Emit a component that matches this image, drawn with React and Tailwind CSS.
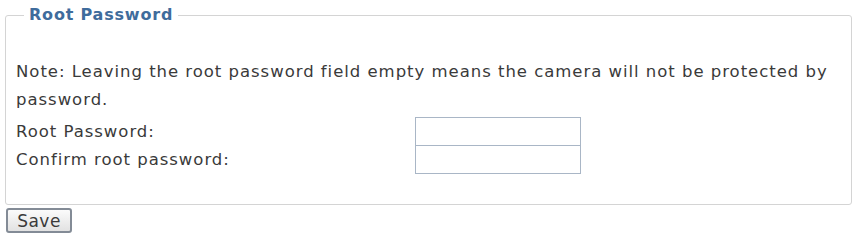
export default function App() {
  return (
    <div className="w-[854px] h-[235px] bg-white pt-[5px] pl-[5px] pr-[2px] text-[#3a3a3a] font-['DejaVu_Sans',sans-serif] text-[16.5px] tracking-[0.97px] leading-[28px]">
      <fieldset className="border border-[#d4d4d4] rounded-[3px] h-[200px] pl-[10px] pr-2 pt-[33px]">
        <legend className="ml-[8px] px-[5px] text-[16px] tracking-[0.8px] font-bold text-[#3f6c9c] leading-[20px]">
          Root Password
        </legend>
        <p>Note: Leaving the root password field empty means the camera will not be protected by password.</p>
        <div className="flex items-center h-[29px] mt-[3px]">
          <span className="w-[399px]">Root Password:</span>
          <input type="password" className="w-[166px] h-[29px] border border-[#a9b6c6] bg-white outline-none" />
        </div>
        <div className="flex items-center h-[29px] -mt-px">
          <span className="w-[399px]">Confirm root password:</span>
          <input type="password" className="w-[166px] h-[29px] border border-[#a9b6c6] bg-white outline-none" />
        </div>
      </fieldset>
      <button className="mt-[3px] ml-px w-[66px] h-[25px] border-2 border-[#838b96] rounded-[3px] bg-gradient-to-b from-[#fbfbfb] to-[#e2e2e2] text-[17px] tracking-[0.5px] leading-[20px] text-[#3a3a3a]">
        Save
      </button>
    </div>
  );
}
